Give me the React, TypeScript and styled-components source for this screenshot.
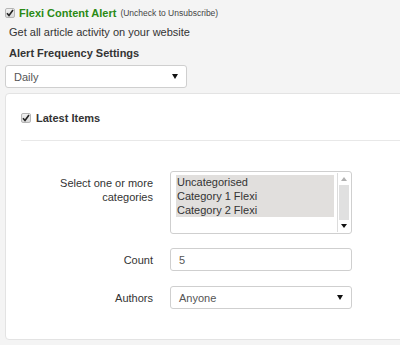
import React from "react";
import styled, { createGlobalStyle } from "styled-components";

const Global = createGlobalStyle`
  html, body { margin: 0; padding: 0; background: #f4f4f4; }
  body { font-family: "Liberation Sans", Arial, sans-serif; color: #333; }
`;

const Page = styled.div`
  width: 400px;
  height: 345px;
  overflow: hidden;
  padding: 6px 0 0 5px;
  box-sizing: border-box;
`;

const TitleRow = styled.div`
  display: flex;
  align-items: center;
  gap: 4px;
  height: 14px;
`;

const Box = styled.span`
  width: 10px;
  height: 10px;
  border: 1px solid #b5b5b5;
  border-radius: 2px;
  background: linear-gradient(#f2f2f2, #d9d9d9);
  box-sizing: border-box;
  display: inline-flex;
  align-items: center;
  justify-content: center;
  flex: none;
`;

const Title = styled.span`
  color: #2a8a14;
  font-weight: bold;
  font-size: 11px;
`;

const Small = styled.span`
  font-size: 8.5px;
  color: #444;
`;

const Desc = styled.div`
  font-size: 11px;
  margin: 6px 0 0 4px;
  color: #333;
`;

const Heading = styled.div`
  font-size: 11px;
  font-weight: bold;
  margin: 9px 0 0 4px;
  color: #333;
`;

const SelectBox = styled.div<{ $mt?: number }>`
  width: 182px;
  height: 23px;
  margin-top: ${(p) => p.$mt ?? 0}px;
  box-sizing: border-box;
  background: #fff;
  border: 1px solid #cfcfcf;
  border-radius: 3px;
  display: flex;
  align-items: center;
  justify-content: space-between;
  padding: 0 8px 0 8px;
  font-size: 11px;
  color: #555;
`;

const Arrow = styled.span`
  width: 0;
  height: 0;
  border-left: 3px solid transparent;
  border-right: 3px solid transparent;
  border-top: 5px solid #111;
`;

const Panel = styled.div`
  margin-top: 5px;
  width: 410px;
  height: 247px;
  box-sizing: border-box;
  background: #fff;
  border: 1px solid #e3e3e3;
  border-radius: 4px;
  padding: 19px 0 0 15px;
`;

const SubTitleRow = styled.div`
  display: flex;
  align-items: center;
  gap: 5px;
  font-size: 11px;
  font-weight: bold;
  color: #333;
  height: 10px;
`;

const Rule = styled.div`
  height: 1px;
  background: #e8e8e8;
  margin: 17px 0 0 0;
`;

const Form = styled.div`
  display: grid;
  grid-template-columns: 147px 182px;
  column-gap: 17px;
  align-items: center;
  margin: 30px 0 0 -15px;
`;

const Label = styled.div<{ $top?: boolean }>`
  text-align: right;
  font-size: 11px;
  color: #333;
  line-height: 14px;
  align-self: ${(p) => (p.$top ? "start" : "center")};
  margin-top: ${(p) => (p.$top ? 5 : 0)}px;
`;

const ListBox = styled.div`
  height: 63px;
  box-sizing: border-box;
  border: 1px solid #cfcfcf;
  border-radius: 3px;
  background: #fff;
  display: flex;
  padding: 2px 1px 2px 5px;
`;

const Items = styled.div`
  flex: 1;
  padding-top: 1px;
`;

const Item = styled.div`
  background: #e1dfdd;
  font-size: 11px;
  color: #333;
  height: 14px;
  line-height: 14px;
  padding-left: 1px;
  margin-right: 3px;
`;

const ScrollBar = styled.div`
  width: 12px;
  display: flex;
  flex-direction: column;
  margin: -1px 0 -1px 0;
  border-left: 1px solid #dcdcdc;
`;

const ScrollBtn = styled.div`
  height: 12px;
  display: flex;
  align-items: center;
  justify-content: center;
  background: #fff;
`;

const Track = styled.div`
  flex: 1;
  background: #e0e0e0;
  margin: 0 1px;
`;

const UpArrow = styled.span`
  width: 0;
  height: 0;
  border-left: 3px solid transparent;
  border-right: 3px solid transparent;
  border-bottom: 4px solid #b0b0b0;
`;

const DownArrow = styled.span`
  width: 0;
  height: 0;
  border-left: 3px solid transparent;
  border-right: 3px solid transparent;
  border-top: 4px solid #111;
`;

const Input = styled.div`
  height: 23px;
  box-sizing: border-box;
  border: 1px solid #cfcfcf;
  border-radius: 3px;
  background: #fff;
  font-size: 11px;
  color: #555;
  display: flex;
  align-items: center;
  padding-left: 8px;
`;

const Spacer = styled.div<{ $h: number }>`
  grid-column: 1 / span 2;
  height: ${(p) => p.$h}px;
`;

const Check = () => (
  <svg width="8" height="8" viewBox="0 0 8 8">
    <path d="M1 4.2 L3 6.5 L7 1" fill="none" stroke="#222" strokeWidth="1.6" />
  </svg>
);

export default function App() {
  return (
    <>
      <Global />
      <Page>
        <TitleRow>
          <Box>
            <Check />
          </Box>
          <Title>Flexi Content Alert</Title>
          <Small>(Uncheck to Unsubscribe)</Small>
        </TitleRow>
        <Desc>Get all article activity on your website</Desc>
        <Heading>Alert Frequency Settings</Heading>
        <SelectBox $mt={6}>
          <span>Daily</span>
          <Arrow />
        </SelectBox>
        <Panel>
          <SubTitleRow>
            <Box>
              <Check />
            </Box>
            <span>Latest Items</span>
          </SubTitleRow>
          <Rule />
          <Form>
            <Label $top>
              Select one or more
              <br />
              categories
            </Label>
            <ListBox>
              <Items>
                <Item>Uncategorised</Item>
                <Item>Category 1 Flexi</Item>
                <Item>Category 2 Flexi</Item>
              </Items>
              <ScrollBar>
                <ScrollBtn>
                  <UpArrow />
                </ScrollBtn>
                <Track />
                <ScrollBtn>
                  <DownArrow />
                </ScrollBtn>
              </ScrollBar>
            </ListBox>
            <Spacer $h={14} />
            <Label>Count</Label>
            <Input>5</Input>
            <Spacer $h={15} />
            <Label>Authors</Label>
            <SelectBox>
              <span>Anyone</span>
              <Arrow />
            </SelectBox>
          </Form>
        </Panel>
      </Page>
    </>
  );
}
